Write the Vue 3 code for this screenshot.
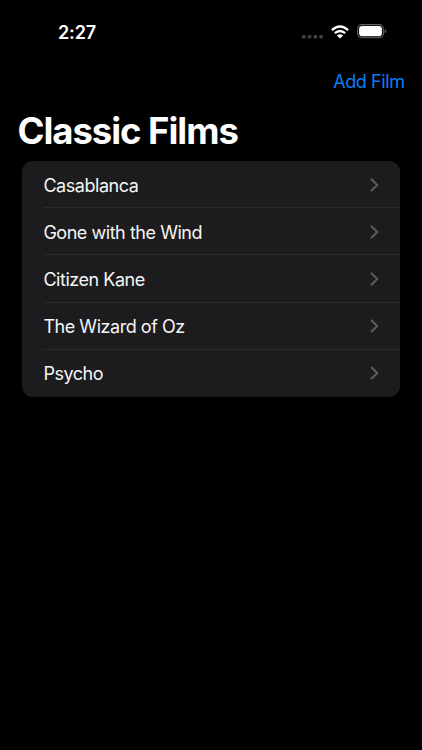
<script setup>
const films = ['Casablanca', 'Gone with the Wind', 'Citizen Kane', 'The Wizard of Oz', 'Psycho']
</script>

<template>
  <main class="screen">
    <header class="status">
      <span class="time">2:27</span>
      <div class="indicators">
        <svg class="dots" width="21" height="4" viewBox="0 0 21 4" fill="#424244">
          <rect x="0" y="0" width="3.6" height="3.6" rx="1.3" />
          <rect x="5.8" y="0" width="3.6" height="3.6" rx="1.3" />
          <rect x="11.6" y="0" width="3.6" height="3.6" rx="1.3" />
          <rect x="17.3" y="0" width="3.6" height="3.6" rx="1.3" />
        </svg>
        <svg class="wifi" width="18" height="14" viewBox="0 0 18 14">
          <g fill="none" stroke="#fff" stroke-width="2.4">
            <path d="M.9 5.1Q9-2.2 17.1 5.1" />
            <path d="M3.8 8.2Q9 3.6 14.2 8.2" />
          </g>
          <path d="M5.9 10.5Q9 8.1 12.1 10.5L9 13.6Z" fill="#fff" />
        </svg>
        <svg class="battery" width="30" height="15" viewBox="0 0 30 15">
          <rect x=".6" y=".6" width="25.8" height="13.2" rx="4.4" fill="none" stroke="#646466" stroke-width="1.1" />
          <rect x="2.1" y="2.1" width="22.8" height="10.2" rx="3.1" fill="#fff" />
          <path d="M27.6 5v4.4q1.5-.7 1.5-2.2T27.6 5Z" fill="#646466" />
        </svg>
      </div>
    </header>
    <nav class="toolbar"><button class="add">Add Film</button></nav>
    <h1 class="title">Classic Films</h1>
    <ul class="list">
      <li v-for="film in films" :key="film" class="row">
        <span class="name">{{ film }}</span>
        <svg class="chevron" width="9" height="14" viewBox="0 0 9 14">
          <path d="M1.6 1.4L7.3 7L1.6 12.6" fill="none" stroke="#5b5b5f" stroke-width="2.1" stroke-linecap="round" stroke-linejoin="round" />
        </svg>
      </li>
    </ul>
  </main>
</template>

<style>
body { background: #000; }
</style>

<style scoped>
.screen {
  box-sizing: border-box;
  width: 422px;
  height: 750px;
  overflow: hidden;
  background: #000;
  color: #fff;
  font-family: Inter, "Liberation Sans", sans-serif;
}
.status {
  display: flex;
  align-items: center;
  justify-content: space-between;
  height: 63px;
  padding: 0 35px 0 58px;
}
.time {
  padding-top: 2px;
  font-size: 18px;
  font-weight: 600;
  letter-spacing: -0.1px;
}
.indicators { display: flex; align-items: center; }
.dots { margin: 10px 7.5px 0 0; }
.wifi { margin-right: 8.5px; }
.toolbar {
  display: flex;
  justify-content: flex-end;
  align-items: center;
  height: 38px;
  padding-right: 17.5px;
}
.add {
  padding: 0;
  border: 0;
  background: none;
  color: #0a7ff5;
  font: 400 18px/24px Inter, "Liberation Sans", sans-serif;
  letter-spacing: -0.42px;
}
.title {
  margin: 0;
  padding: 8px 0 8px 17.5px;
  font-size: 36.5px;
  font-weight: 700;
  line-height: 44px;
  letter-spacing: -1.05px;
}
.list {
  width: 378px;
  margin: 0 0 0 22px;
  padding: 0;
  list-style: none;
  border-radius: 11px;
  background: #1c1c1e;
}
.row {
  display: flex;
  align-items: center;
  justify-content: space-between;
  box-sizing: border-box;
  height: 47.2px;
  padding: 0 21.2px 0 21.4px;
  background: linear-gradient(#2b2b2e, #2b2b2e) 21px 100% / 100% 1px no-repeat;
}
.row:last-child { background: none; }
.name {
  padding-top: 2.2px;
  color: #f5f5f5;
  font-size: 18px;
  line-height: 24px;
  letter-spacing: -0.46px;
}
</style>
